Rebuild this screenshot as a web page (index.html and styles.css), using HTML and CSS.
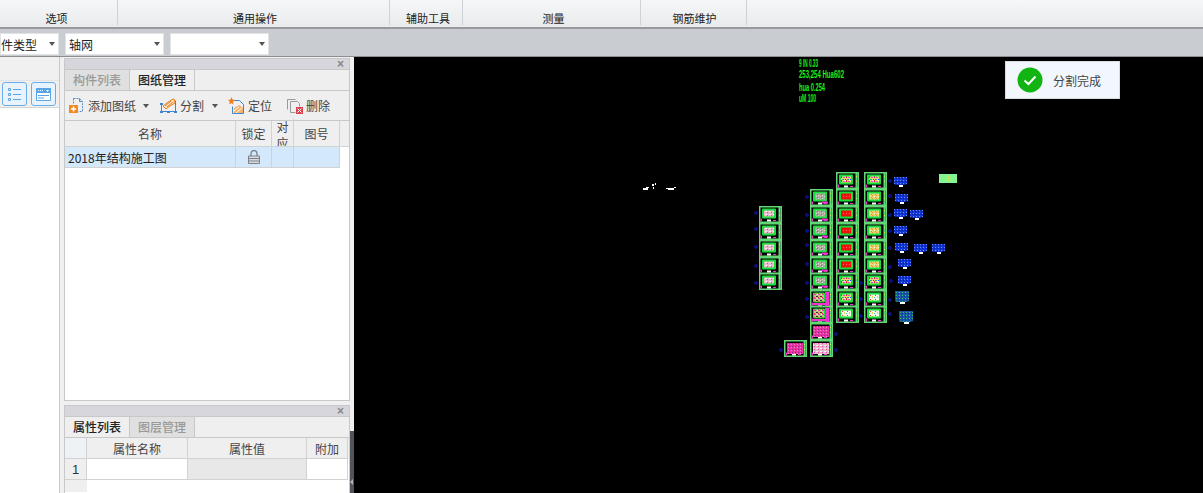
FILE: index.html

```html
<!DOCTYPE html>
<html lang="zh-CN">
<head>
    <meta charset="UTF-8">
    <title>图纸管理</title>
    <link rel="stylesheet" href="styles.css">
</head>
<body>
    <div class="ribbon">
        <div class="group g1">选项</div>
        <div class="group g2">通用操作</div>
        <div class="group g3">辅助工具</div>
        <div class="group g4">测量</div>
        <div class="group g5">钢筋维护</div>
    </div>
    <div class="bar">
        <div class="combo c1"><span class="cut">构件类型</span><i class="caret"></i></div>
        <div class="combo c2"><span>轴网</span><i class="caret"></i></div>
        <div class="combo c2"><span></span><i class="caret"></i></div>
    </div>
    <div class="main">
        <div class="strip">
            <div class="strip-top"></div>
            <div class="strip-btns">
                <div class="sbtn">
                    <svg width="13" height="13" viewBox="0 0 13 13"><g fill="none" stroke="#5aa5e6"><path d="M.5.500h2v2h-2zM.5 5.500h2v2h-2zM.5 10.500h2v2h-2z"/><path d="M5 1.500h8M5 6.500h8M5 11.500h8"/></g></svg>
                </div>
                <div class="sbtn">
                    <svg width="15" height="13" viewBox="0 0 15 13"><path d="M.5.500h14v12H.5z" fill="#fff" stroke="#5aa5e6"/><path d="M0 0h15v5H0z" fill="#5aa5e6"/><path d="M2 2h1v1H2zM4 2h1v1H4zM6 2h1v1H6zM10 2h3l-1.500 2z" fill="#fff"/><path d="M2 7.500h11M2 10h6" stroke="#5aa5e6"/></svg>
                </div>
            </div>
        </div>
        <div class="side">
            <div class="panel top-panel">
                <div class="panel-head">×</div>
                <div class="tabs">
                    <div class="tab off">构件列表</div>
                    <div class="tab on">图纸管理</div>
                </div>
                <div class="tools">
                    <div class="tool t-add">
                        <svg width="16" height="17" viewBox="0 0 16 17"><path d="M5.500 1.500h6l3 3v10h-4M5.500 1.500v6" fill="none" stroke="#5b8fc4" stroke-dasharray="2 1"/><path d="M11.500 1.500v3h3" fill="none" stroke="#5b8fc4"/><path d="M1 8h9v8H1z" fill="#f08a24"/><path d="M5.500 9.500v5M3 12h5" stroke="#fff" stroke-width="1.500"/></svg>
                        <span>添加图纸</span><i class="caret"></i>
                    </div>
                    <div class="tool t-split">
                        <svg width="17" height="17" viewBox="0 0 17 17"><path d="M1.500 7.500v7h14v-11" fill="none" stroke="#3f86cf"/><path d="M0 14h3v2H0zM7 14h3v2H7zM14 14h3v2h-3zM0 6h3v2H0z" fill="#3f86cf"/><path d="M3 9l8-6 3-1 1 4-5 3-4 3z" fill="#fbe3c8" stroke="#e8801e"/><path d="M5 9l6-5M7 10l6-5" stroke="#e8801e"/></svg>
                        <span>分割</span><i class="caret"></i>
                    </div>
                    <div class="tool t-loc">
                        <svg width="17" height="18" viewBox="0 0 17 18"><path d="M5.500 3.500h6l4 4v9h-11v-7" fill="none" stroke="#3f86cf"/><path d="M3.500 0l1 2.500 2.500.500-2 1.700.5 2.800-2-1.500-2.300 1.500.6-2.800-1.800-1.700 2.500-.5z" fill="#f07d1a"/><path d="M6 11l5-3 4 3v5H6z" fill="#f6b06c"/><path d="M6 14l5-4M8 16l6-5" stroke="#fff"/></svg>
                        <span>定位</span>
                    </div>
                    <div class="tool t-del">
                        <svg width="16" height="16" viewBox="0 0 16 16"><path d="M.5 1.500h8M.5 1.500v10M3.500 3.500h7l2 2v3M3.500 3.500v11h5" fill="none" stroke="#999"/><path d="M9 9h7v7H9z" fill="#d9434e"/><path d="M10.500 10.500l4 4M14.500 10.500l-4 4" stroke="#fff"/></svg>
                        <span>删除</span>
                    </div>
                </div>
                <div class="grid-a head">
                    <div class="cell">名称</div>
                    <div class="cell">锁定</div>
                    <div class="cell wrap">对应</div>
                    <div class="cell">图号</div>
                </div>
                <div class="grid-a row">
                    <div class="cell left">2018年结构施工图</div>
                    <div class="cell">
                        <svg width="12" height="14" viewBox="0 0 12 14"><path d="M3 6V3.500a3 3 0 0 1 6 0V6" fill="none" stroke="#7c8088" stroke-width="1.300"/><path d="M.5 6h11v7.500H.5z" fill="#d8dce2" stroke="#7c8088"/><path d="M1 8.500h10M1 11h10" stroke="#7c8088"/></svg>
                    </div>
                    <div class="cell"></div>
                    <div class="cell"></div>
                </div>
            </div>
            <div class="panel bottom-panel">
                <div class="panel-head">×</div>
                <div class="tabs">
                    <div class="tab on">属性列表</div>
                    <div class="tab off">图层管理</div>
                </div>
                <div class="grid-b head2">
                    <div class="cell corner"></div>
                    <div class="cell">属性名称</div>
                    <div class="cell">属性值</div>
                    <div class="cell">附加</div>
                </div>
                <div class="grid-b row2">
                    <div class="cell num">1</div>
                    <div class="cell white"></div>
                    <div class="cell grey"></div>
                    <div class="cell white"></div>
                </div>
                <div class="grid-b row3">
                    <div class="cell num"></div>
                </div>
            </div>
            <div class="handle"><i></i></div>
        </div>
        <div class="canvas">
            <svg class="cad" width="849" height="436" viewBox="354 57 849 436">
                <defs>
                    <pattern id="pGrey" width="4" height="3" patternUnits="userSpaceOnUse"><path d="M0 0h4v3H0z" fill="#a9a99c"/><path d="M0 0h1v1H0zM2 1h1v1H2z" fill="#d8d8d0"/><path d="M3 2h1v1H3z" fill="#6f7f6a"/></pattern>
                    <pattern id="pRed" width="3" height="3" patternUnits="userSpaceOnUse"><path d="M0 0h3v3H0z" fill="#f01010"/><path d="M1 1h1v1H1z" fill="#ff6a6a"/></pattern>
                    <pattern id="pPink" width="4" height="3" patternUnits="userSpaceOnUse"><path d="M0 0h4v3H0z" fill="#e8b8cc"/><path d="M0 0h1v1H0z" fill="#f040b0"/><path d="M2 2h2v1H2z" fill="#f6f0f0"/></pattern>
                    <pattern id="pYel" width="4" height="3" patternUnits="userSpaceOnUse"><path d="M0 0h4v3H0z" fill="#e6d46a"/><path d="M0 0h1v1H0z" fill="#f09030"/><path d="M2 1h1v1H2z" fill="#f4f4e0"/><path d="M3 2h1v1H3z" fill="#a0a0a0"/></pattern>
                    <pattern id="pMix" width="5" height="4" patternUnits="userSpaceOnUse"><path d="M0 0h5v4H0z" fill="#ecd870"/><path d="M0 0h1v2H0z" fill="#f02020"/><path d="M2 1h2v1H2z" fill="#f040e0"/><path d="M1 3h2v1H1z" fill="#20a0a0"/><path d="M4 3h1v1H4z" fill="#2040f0"/><path d="M3 0h2v1H3z" fill="#f8f8f0"/></pattern>
                    <pattern id="pWhite" width="5" height="4" patternUnits="userSpaceOnUse"><path d="M0 0h5v4H0z" fill="#f8f8e8"/><path d="M1 1h1v1H1z" fill="#f04040"/><path d="M3 2h1v2H3z" fill="#e8d040"/><path d="M0 3h1v1H0z" fill="#40c8e8"/></pattern>
                    <pattern id="pLoud" width="4" height="4" patternUnits="userSpaceOnUse"><path d="M0 0h4v4H0z" fill="#c8c080"/><path d="M0 0h2v1H0z" fill="#f030d0"/><path d="M2 2h2v1H2z" fill="#303030"/><path d="M3 0h1v1H3z" fill="#f4f4f0"/><path d="M0 3h1v1H0z" fill="#e03030"/></pattern>
                    <pattern id="pMag" width="3" height="3" patternUnits="userSpaceOnUse"><path d="M0 0h3v3H0z" fill="#e830a8"/><path d="M1 1h1v1H1z" fill="#f090b0"/><path d="M2 0h1v1H2z" fill="#903070"/></pattern>
                    <pattern id="pBlue" width="3" height="3" patternUnits="userSpaceOnUse"><path d="M0 0h3v3H0z" fill="#1036d8"/><path d="M1 1h1v1H1z" fill="#6a8ee8"/><path d="M0 2h1v1H0z" fill="#0c1c90"/></pattern>
                    <pattern id="pBlueG" width="3" height="3" patternUnits="userSpaceOnUse"><path d="M0 0h3v3H0z" fill="#1858a0"/><path d="M1 1h1v1H1z" fill="#40c060"/><path d="M0 2h1v1H0z" fill="#1030b0"/></pattern>

                    <g id="frame">
                        <path d="M.75.750h21.500v15.500H.75z" fill="#000" stroke="#62d874" stroke-width="1.500"/>
                        <path d="M19.500 1h2v15h-2z" fill="#62d874"/>
                        <path d="M20 4h1v1h-1zM20 9h1v1h-1z" fill="#c8f04a"/>
                        <path d="M1.500 12.500h1.500v3H1.500z" fill="#f030d0"/>
                        <path d="M8 13.500h4v2H8z" fill="#fff"/>
                        <path d="M14 14h3v1h-3z" fill="#f030d0"/>
                    </g>
                    <g id="sGrey"><use href="#frame"/><path d="M4 3.500h12v8H4z" fill="url(#pGrey)" stroke="#18dc3c" stroke-width="2" stroke-linejoin="round"/><path d="M12 12.500h6v2h-6z" fill="#f030d0"/></g>
                    <g id="sRed"><use href="#frame"/><path d="M4 3.500h12v8H4z" fill="#f01010" stroke="#18dc3c" stroke-width="2" stroke-linejoin="round"/><path d="M6 5h8v5H6z" fill="url(#pRed)"/></g>
                    <g id="sPink"><use href="#frame"/><path d="M4 3.500h12v8H4z" fill="url(#pPink)" stroke="#18dc3c" stroke-width="2" stroke-linejoin="round"/></g>
                    <g id="sYel"><use href="#frame"/><path d="M4 3.500h12v8H4z" fill="url(#pYel)" stroke="#18dc3c" stroke-width="2" stroke-linejoin="round"/></g>
                    <g id="sMix"><use href="#frame"/><path d="M4 3.500h12v8H4z" fill="url(#pMix)" stroke="#18dc3c" stroke-width="2" stroke-linejoin="round"/></g>
                    <g id="sWhite"><use href="#frame"/><path d="M4 3.500h12v8H4z" fill="url(#pWhite)" stroke="#18dc3c" stroke-width="2" stroke-linejoin="round"/></g>
                    <g id="sMag"><use href="#frame"/><path d="M3 3h16v11H3z" fill="url(#pMag)"/></g>
                    <g id="sPale"><use href="#frame"/><path d="M3 3h16v11H3z" fill="url(#pPink)"/></g>
                    <g id="sLoud"><use href="#frame"/><path d="M3.500 3h11v9h-11z" fill="url(#pLoud)" stroke="#18dc3c"/><path d="M15 2h4v14h-4zM2 13h13v2H2z" fill="#f030d0"/></g>
                    <g id="blob"><path d="M1 1h13v7l-3 1H3L1 8z" fill="url(#pBlue)"/><path d="M6 9h4v2H6z" fill="#fff"/></g>
                    <g id="blobG"><path d="M0 0h14v10l-3 1H2L0 10z" fill="url(#pBlueG)"/><path d="M5 11h5v2H5z" fill="#fff"/></g>
                </defs>

                <g class="notes">
                    <text x="799" y="67" textLength="19" lengthAdjust="spacingAndGlyphs">9 IN 0.33</text>
                    <text x="799" y="78" textLength="45" lengthAdjust="spacingAndGlyphs">253,254 Hua602</text>
                    <text x="799" y="91" textLength="26" lengthAdjust="spacingAndGlyphs">hua 0.254</text>
                    <text x="799" y="102" textLength="17" lengthAdjust="spacingAndGlyphs">uM 100</text>
                </g>

                <path d="M646 187h3v1h-3zM643 188h5v2h-5zM652 184h2v2h-2zM653 187h1v2h-1zM655 183h1v2h-1zM666 188h8v1h-8zM668 189h6v1h-6zM674 187h2v1h-2z" fill="#fff"/>
                <path d="M939 174h18v9h-18z" fill="#86f58e"/>
                <path d="M948 176h1v5h-1z" fill="#cfe85a"/>

                <use href="#sPink" x="759" y="206"/>
                <use href="#sPink" x="759" y="223"/>
                <use href="#sPink" x="759" y="240"/>
                <use href="#sPink" x="759" y="257"/>
                <use href="#sPink" x="759" y="273"/>

                <use href="#sGrey" x="810" y="189"/>
                <use href="#sGrey" x="810" y="206"/>
                <use href="#sGrey" x="810" y="223"/>
                <use href="#sGrey" x="810" y="240"/>
                <use href="#sGrey" x="810" y="257"/>
                <use href="#sGrey" x="810" y="273"/>
                <use href="#sLoud" x="810" y="290"/>
                <use href="#sLoud" x="810" y="306"/>
                <use href="#sMag" x="810" y="323"/>
                <use href="#sPale" x="810" y="340"/>
                <use href="#sMag" x="784" y="340"/>

                <use href="#sMix" x="836" y="172"/>
                <use href="#sRed" x="836" y="189"/>
                <use href="#sRed" x="836" y="206"/>
                <use href="#sRed" x="836" y="223"/>
                <use href="#sRed" x="836" y="240"/>
                <use href="#sRed" x="836" y="257"/>
                <use href="#sMix" x="836" y="273"/>
                <use href="#sMix" x="836" y="290"/>
                <use href="#sWhite" x="836" y="306"/>

                <use href="#sMix" x="864" y="172"/>
                <use href="#sYel" x="864" y="189"/>
                <use href="#sYel" x="864" y="206"/>
                <use href="#sYel" x="864" y="223"/>
                <use href="#sYel" x="864" y="240"/>
                <use href="#sYel" x="864" y="257"/>
                <use href="#sMix" x="864" y="273"/>
                <use href="#sWhite" x="864" y="290"/>
                <use href="#sWhite" x="864" y="306"/>

                <use href="#blob" x="893" y="176"/>
                <use href="#blob" x="894" y="193"/>
                <use href="#blob" x="893" y="208"/>
                <use href="#blob" x="909" y="209"/>
                <use href="#blob" x="893" y="225"/>
                <use href="#blob" x="894" y="242"/>
                <use href="#blob" x="913" y="243"/>
                <use href="#blob" x="931" y="243"/>
                <use href="#blob" x="897" y="258"/>
                <use href="#blob" x="897" y="275"/>
                <use href="#blobG" x="895" y="291"/>
                <use href="#blobG" x="899" y="311"/>

                <g class="marks">
                    <circle cx="756" cy="213" r="1.300"/><circle cx="756" cy="229" r="1.300"/><circle cx="756" cy="247" r="1.300"/><circle cx="756" cy="266" r="1.300"/><circle cx="756" cy="283" r="1.300"/>
                    <circle cx="807" cy="197" r="1.300"/><circle cx="807" cy="215" r="1.300"/><circle cx="807" cy="231" r="1.300"/><circle cx="807" cy="245" r="1.300"/><circle cx="807" cy="264" r="1.300"/><circle cx="807" cy="283" r="1.300"/><circle cx="807" cy="299" r="1.300"/><circle cx="807" cy="317" r="1.300"/>
                    <circle cx="836" cy="334" r="1.300"/><circle cx="836" cy="350" r="1.300"/><circle cx="781" cy="350" r="1.300"/>
                    <circle cx="861" cy="283" r="1.300"/><circle cx="861" cy="299" r="1.300"/><circle cx="861" cy="316" r="1.300"/>
                    <circle cx="890" cy="181" r="1.300"/><circle cx="890" cy="196" r="1.300"/><circle cx="890" cy="215" r="1.300"/><circle cx="890" cy="231" r="1.300"/><circle cx="890" cy="248" r="1.300"/><circle cx="890" cy="267" r="1.300"/><circle cx="891" cy="281" r="1.300"/><circle cx="890" cy="300" r="1.300"/><circle cx="890" cy="314" r="1.300"/>
                </g>
            </svg>
            <div class="toast">
                <svg width="26" height="26" viewBox="0 0 26 26"><circle cx="13" cy="13" r="12.500" fill="#12b412"/><path d="M7.500 13.500l4 3.500 7-7.500" fill="none" stroke="#fff" stroke-width="2"/></svg>
                <span>分割完成</span>
            </div>
        </div>
    </div>
</body>
</html>
```

FILE: styles.css

```css
html, body {
    margin: 0;
    height: 100%;
    overflow: hidden;
}
body {
    display: flex;
    flex-direction: column;
    font-family: "Noto Sans CJK SC", "Liberation Sans", sans-serif;
    font-size: 12px;
    color: #333;
    background: #000;
}

/* top ribbon */
.ribbon {
    display: flex;
    flex: none;
    height: 27px;
    background: linear-gradient(#f6f7f8, #e8eaec);
    border-bottom: 2px solid #96999d;
}
.group {
    box-sizing: border-box;
    height: 25px;
    border-right: 1px solid #cfd2d5;
    text-align: center;
    font-size: 11px;
    line-height: 15px;
    padding-top: 11px;
    color: #222;
}
.g1 { width: 118px; padding-right: 4px; }
.g2 { width: 272px; padding-left: 3px; }
.g3 { width: 73px; padding-left: 4px; }
.g4 { width: 178px; padding-left: 4px; }
.g5 { width: 106px; padding-left: 2px; }

/* combo row */
.bar {
    flex: none;
    height: 28px;
    box-sizing: border-box;
    background: #c9ccd0;
    display: flex;
    gap: 6px;
    padding-top: 4px;
    border-bottom: 1px solid #8b8d90;
}
.combo {
    box-sizing: border-box;
    height: 22px;
    background: #fff;
    border: 1px solid #e2e3e5;
    display: flex;
    align-items: center;
    justify-content: space-between;
    padding: 0 3px 0 3px;
    overflow: hidden;
    color: #222;
}
.c1 { width: 59px; padding-left: 0; }
.c2 { width: 99px; }
.cut { margin-left: -12px; white-space: nowrap; }
.caret {
    display: inline-block;
    width: 0;
    height: 0;
    border-left: 3px solid transparent;
    border-right: 3px solid transparent;
    border-top: 4px solid #555;
}

.main {
    flex: 1;
    display: flex;
    min-height: 0;
}

/* left strip */
.strip {
    flex: none;
    width: 60px;
    box-sizing: border-box;
    background: #fff;
    border-right: 1px solid #c8c8c8;
}
.strip-top {
    height: 23px;
    background: #f0f0f0;
    border-bottom: 1px solid #e4e4e4;
}
.strip-btns {
    display: flex;
    gap: 4px;
    padding: 1px 3px 1px 2px;
    justify-content: flex-end;
    background: #f0f0f0;
    border-bottom: 1px solid #d4d4d4;
}
.sbtn {
    box-sizing: border-box;
    width: 25px;
    height: 24px;
    background: #e8f3fd;
    border: 1px solid #69aeea;
    border-radius: 3px;
    display: flex;
    align-items: center;
    justify-content: center;
}

/* side panels */
.side {
    position: relative;
    flex: none;
    width: 294px;
    box-sizing: border-box;
    padding: 1px 4px 0;
    background: #f0f0f0;
    display: flex;
    flex-direction: column;
    gap: 4px;
}
.panel {
    box-sizing: border-box;
    background: #fff;
    border: 1px solid #c8c8c8;
    overflow: hidden;
}
.top-panel { height: 343px; flex: none; }
.bottom-panel { flex: 1; border-bottom: none; }
.panel-head {
    height: 10px;
    background: #d6d6dc;
    border-bottom: 1px solid #c8c8c8;
    text-align: right;
    padding-right: 5px;
    font: bold 12px/10px "Liberation Sans", sans-serif;
    color: #888;
}
.tabs {
    display: flex;
    height: 20px;
    background: #efefef;
    border-bottom: 1px solid #c8c8c8;
}
.tab {
    box-sizing: border-box;
    width: 65px;
    text-align: center;
    line-height: 20px;
    font-weight: 500;
    border-right: 1px solid #c8c8c8;
}
.tab.off { background: #e0e0e0; color: #999; }
.tab.on { background: #efefef; color: #222; }

.tools {
    display: flex;
    align-items: center;
    height: 29px;
    background: #efefef;
    border-bottom: 1px solid #c8c8c8;
    padding-left: 3px;
    color: #444;
}
.tool {
    display: flex;
    align-items: center;
    gap: 4px;
}
.t-add { width: 92px; }
.t-add .caret { margin-left: 3px; }
.t-split { width: 68px; gap: 3px; }
.t-split .caret { margin-left: 5px; }
.t-loc { width: 59px; gap: 3px; }
.t-del { gap: 3px; }

/* tables */
.grid-a {
    display: grid;
    grid-template-columns: 171px 36px 22px 46px;
}
.cell {
    box-sizing: border-box;
    border-right: 1px solid #d2d2d2;
    border-bottom: 1px solid #d2d2d2;
    display: flex;
    align-items: center;
    justify-content: center;
    overflow: hidden;
}
.head {
    height: 26px;
    background: #efefef;
    border-bottom: 1px solid #d2d2d2;
    box-sizing: border-box;
    color: #444;
}
.head .cell { border-bottom: none; }
.wrap {
    display: block;
    text-align: center;
    line-height: 16px;
    margin-top: -2px;
    padding: 0 3px;
}
.row {
    height: 21px;
    color: #222;
}
.row .cell { background: #d3e8fa; }
.left {
    justify-content: flex-start;
    padding-left: 3px;
}
.grid-b {
    display: grid;
    grid-template-columns: 22px 101px 119px 41px;
}
.head2 {
    height: 21px;
    background: #efefef;
    color: #444;
}
.corner { background: #eef1f6; }
.row2 { height: 21px; }
.row3 { height: 12px; }
.num { background: #efefef; font: 13px "Liberation Sans", sans-serif; }
.row3 .num { border: none; }
.white { background: #fff; }
.grey { background: #e8e8e8; }

.handle {
    position: absolute;
    right: 0;
    bottom: 0;
    width: 4px;
    height: 62px;
    background: #50555b;
}
.handle i {
    position: absolute;
    top: 48px;
    left: 0;
    border-top: 3px solid transparent;
    border-bottom: 3px solid transparent;
    border-right: 3px solid #b0b4b8;
}

/* drawing area */
.canvas {
    position: relative;
    flex: 1;
    background: #000;
    overflow: hidden;
}
.cad { display: block; }
.notes text {
    font: bold 10px "Liberation Sans", sans-serif;
    fill: #1cf01c;
}
.marks circle {
    fill: none;
    stroke: #1414c8;
}
.toast {
    position: absolute;
    top: 4px;
    left: 651px;
    width: 115px;
    height: 38px;
    box-sizing: border-box;
    background: #f2f7fe;
    border: 1px solid #d8dce2;
    display: flex;
    align-items: center;
    gap: 10px;
    padding-left: 11px;
    color: #444;
}
```
